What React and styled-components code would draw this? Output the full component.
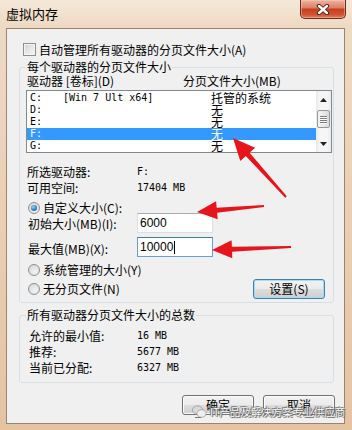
import React from "react";
import styled, { createGlobalStyle } from "styled-components";

const GlobalStyle = createGlobalStyle`
  html, body { margin: 0; padding: 0; background: #fff; }
  body {
    font-family: "Noto Sans CJK SC", "Liberation Sans", sans-serif;
    font-size: 12px;
    color: #000;
  }
`;

const drives = [
  { id: "C:", label: "[Win 7 Ult x64]", size: "托管的系统" },
  { id: "D:", label: "", size: "无" },
  { id: "E:", label: "", size: "无" },
  { id: "F:", label: "", size: "无", selected: true },
  { id: "G:", label: "", size: "无" },
];

const totals = [
  ["允许的最小值:", "16 MB"],
  ["推荐:", "5677 MB"],
  ["当前已分配:", "6327 MB"],
];

// tapered red annotation arrow, tail -> tip
function arrowPoints([tx, ty], [px, py], len, half, w1, w2) {
  const d = Math.hypot(px - tx, py - ty);
  const dx = (px - tx) / d;
  const dy = (py - ty) / d;
  const nx = -dy;
  const ny = dx;
  const bx = px - dx * len;
  const by = py - dy * len;
  const pts = [
    [tx + (nx * w1) / 2, ty + (ny * w1) / 2],
    [bx + (nx * w2) / 2, by + (ny * w2) / 2],
    [bx + nx * half, by + ny * half],
    [px, py],
    [bx - nx * half, by - ny * half],
    [bx - (nx * w2) / 2, by - (ny * w2) / 2],
    [tx - (nx * w1) / 2, ty - (ny * w1) / 2],
  ];
  return pts.map((p) => p.map((v) => v.toFixed(1)).join(",")).join(" ");
}

const arrows = [
  { tail: [286, 197], tip: [233, 138], len: 22, half: 10 },
  { tail: [264, 206], tip: [197, 212], len: 20, half: 9 },
  { tail: [291, 247], tip: [212, 250], len: 20, half: 9 },
];

export default function App() {
  return (
    <>
      <GlobalStyle />
      <Window>
        <TitleBar>
          <Title>虚拟内存</Title>
          <CloseButton>
            <svg width="14" height="11" viewBox="0 0 14 11">
              <path d="M3 2 L11 9 M11 2 L3 9" stroke="#4a1a12" strokeWidth="4.2" strokeLinecap="round" />
              <path d="M3 2 L11 9 M11 2 L3 9" stroke="#fff" strokeWidth="2.4" strokeLinecap="round" />
            </svg>
          </CloseButton>
        </TitleBar>

        <Client>
          <CheckRow>
            <CheckBox />
            <span>自动管理所有驱动器的分页文件大小(A)</span>
          </CheckRow>

          <Group $mt={4} $pad="0 1px 3px 6px">
            <Legend>每个驱动器的分页文件大小</Legend>
            <ColumnHeader>
              <span>驱动器 [卷标](D)</span>
              <span>分页文件大小(MB)</span>
            </ColumnHeader>

            <ListBox>
              <Rows>
                {drives.map((d) => (
                  <DriveRow key={d.id} $selected={d.selected}>
                    <Mono>{d.id}</Mono>
                    <Mono>{d.label}</Mono>
                    <SizeCell>{d.size}</SizeCell>
                  </DriveRow>
                ))}
              </Rows>
              <ScrollBar>
                <ScrollArrow>
                  <svg width="7" height="4" viewBox="0 0 7 4">
                    <path d="M0 4 L3.5 0 L7 4 Z" fill="#222" />
                  </svg>
                </ScrollArrow>
                <Track>
                  <Thumb>
                    <Grip />
                    <Grip />
                    <Grip />
                    <Grip />
                  </Thumb>
                </Track>
                <ScrollArrow>
                  <svg width="7" height="4" viewBox="0 0 7 4">
                    <path d="M0 0 L3.5 4 L7 0 Z" fill="#222" />
                  </svg>
                </ScrollArrow>
              </ScrollBar>
            </ListBox>

            <InfoRow $mt={11}>
              <span>所选驱动器:</span>
              <Mono>F:</Mono>
            </InfoRow>
            <InfoRow>
              <span>可用空间:</span>
              <Mono>17404 MB</Mono>
            </InfoRow>

            <RadioRow $mt={6} $h={12}>
              <Radio $checked />
              <span>自定义大小(C):</span>
            </RadioRow>

            <InputRow $mt={-1}>
              <span>初始大小(MB)(I):</span>
              <TextBox>6000</TextBox>
            </InputRow>
            <InputRow $mt={4}>
              <InputLabel>最大值(MB)(X):</InputLabel>
              <TextBox $focused>
                10000
                <Caret />
              </TextBox>
            </InputRow>

            <RadioRow $mt={6} $h={14}>
              <Radio />
              <span>系统管理的大小(Y)</span>
            </RadioRow>
            <LastRow>
              <RadioRow $h={20}>
                <Radio />
                <span>无分页文件(N)</span>
              </RadioRow>
              <Button $default>设置(S)</Button>
            </LastRow>
          </Group>

          <Group $mt={5} $pad="6px 1px 6px 6px">
            <Legend>所有驱动器分页文件大小的总数</Legend>
            {totals.map(([k, v]) => (
              <TotalRow key={k}>
                <span>{k}</span>
                <Mono>{v}</Mono>
              </TotalRow>
            ))}
          </Group>

          <Footer>
            <Button>确定</Button>
            <Button>取消</Button>
          </Footer>
        </Client>

        <Annotations width="352" height="430" viewBox="0 0 352 430">
          {arrows.map((a, i) => (
            <polygon
              key={i}
              points={arrowPoints(a.tail, a.tip, a.len, a.half, 2.2, 5)}
              fill="#e8141c"
            />
          ))}
        </Annotations>

        <Watermark>
          <svg width="15" height="14" viewBox="0 0 15 14">
            <ellipse cx="5.5" cy="5" rx="5" ry="4.2" fill="#d9d9d9" stroke="#9a9a9a" strokeWidth="0.8" />
            <ellipse cx="9.5" cy="8.5" rx="4.6" ry="3.8" fill="#eeeeee" stroke="#9a9a9a" strokeWidth="0.8" />
            <path d="M3 12.5 L9 12.5" stroke="#777" strokeWidth="1" />
          </svg>
          <WatermarkText>IT产品及解决方案专业供应商</WatermarkText>
        </Watermark>
      </Window>
    </>
  );
}

const Window = styled.div`
  position: relative;
  width: 352px;
  height: 430px;
  box-sizing: border-box;
  padding: 0 7px 6px 6px;
  display: flex;
  flex-direction: column;
  overflow: hidden;
  background: linear-gradient(180deg, #f5e8d9 0px, #eedac3 26px, #e8cdb0 60%, #e4c3a3 100%);
`;

const TitleBar = styled.div`
  height: 28px;
  display: flex;
  align-items: flex-start;
  flex-shrink: 0;
`;

const Title = styled.div`
  margin-top: 6px;
  font-size: 13px;
  line-height: 16px;
  color: #000;
`;

const CloseButton = styled.div`
  margin-left: auto;
  margin-right: -1px;
  width: 46px;
  height: 19px;
  box-sizing: border-box;
  border: 1px solid #6b2a1e;
  border-top: none;
  border-radius: 0 0 5px 5px;
  display: flex;
  align-items: center;
  justify-content: center;
  background: linear-gradient(180deg, #eeb3a2 0%, #dd8068 42%, #c7401f 52%, #cf5233 80%, #e07a5c 100%);
  box-shadow: inset 0 0 0 1px rgba(255, 210, 195, 0.45);
`;

const Client = styled.div`
  flex: 1;
  display: flex;
  flex-direction: column;
  border: 1px solid #9e836c;
  background: #f0f0f0;
  padding: 14px 9px 0 0;
`;

const CheckRow = styled.div`
  display: flex;
  align-items: center;
  gap: 3px;
  height: 13px;
  line-height: 13px;
  margin-left: 16px;
`;

const CheckBox = styled.div`
  width: 13px;
  height: 13px;
  box-sizing: border-box;
  border: 1px solid #8e8f8f;
  background: linear-gradient(135deg, #cdd0d4 0%, #e6e6e6 50%, #f7f7f7 100%);
  box-shadow: inset 0 0 0 1px #f4f4f4;
`;

const Group = styled.fieldset`
  margin: ${(p) => p.$mt}px 0 0 12px;
  width: 315px;
  min-width: 0;
  box-sizing: border-box;
  border: 1px solid #d5dfe5;
  border-radius: 3px;
  padding: ${(p) => p.$pad};
`;

const Legend = styled.legend`
  padding: 0 1px;
  font-size: 12px;
  line-height: 14px;
`;

const ColumnHeader = styled.div`
  display: grid;
  grid-template-columns: 156px 1fr;
  padding-left: 1px;
  line-height: 14px;
  height: 14px;
`;

const ListBox = styled.div`
  margin-top: 2px;
  height: 63px;
  box-sizing: border-box;
  border: 1px solid #828790;
  background: #fff;
  display: flex;
`;

const Rows = styled.div`
  flex: 1;
  padding-top: 1px;
`;

const DriveRow = styled.div`
  display: grid;
  grid-template-columns: 33px 148px 1fr;
  height: 12px;
  line-height: 12px;
  padding-left: 3px;
  background: ${(p) => (p.$selected ? "#3399ff" : "transparent")};
  color: ${(p) => (p.$selected ? "#fff" : "#000")};
`;

const Mono = styled.span`
  font-family: "DejaVu Sans Mono", "Liberation Mono", monospace;
  font-size: 10px;
  line-height: inherit;
  white-space: pre;
`;

const SizeCell = styled.span`
  font-size: 12px;
  line-height: 12px;
`;

const ScrollBar = styled.div`
  width: 15px;
  display: flex;
  flex-direction: column;
  background: linear-gradient(90deg, #e9e9e9 0%, #f6f6f6 25%, #f6f6f6 75%, #ececec 100%);
`;

const ScrollArrow = styled.div`
  height: 17px;
  display: flex;
  align-items: center;
  justify-content: center;
  flex-shrink: 0;
`;

const Track = styled.div`
  flex: 1;
  padding: 2px 1px 0;
`;

const Thumb = styled.div`
  height: 18px;
  box-sizing: border-box;
  border: 1px solid #979797;
  border-radius: 2px;
  background: linear-gradient(90deg, #f4f4f4 0%, #e9e9e9 50%, #d9d9d9 100%);
  display: flex;
  flex-direction: column;
  align-items: center;
  justify-content: center;
  gap: 1px;
`;

const Grip = styled.div`
  width: 7px;
  height: 1px;
  background: #7a7a7a;
  box-shadow: 0 1px 0 #fff;
`;

const InfoRow = styled.div`
  display: grid;
  grid-template-columns: 110px 1fr;
  height: 16px;
  line-height: 16px;
  padding-left: 1px;
  margin-top: ${(p) => p.$mt || 0}px;
`;

const RadioRow = styled.div`
  display: flex;
  align-items: center;
  gap: 3px;
  padding-left: 2px;
  height: ${(p) => p.$h}px;
  line-height: ${(p) => p.$h}px;
  margin-top: ${(p) => p.$mt || 0}px;
`;

const Radio = styled.div`
  width: 12px;
  height: 12px;
  box-sizing: border-box;
  border-radius: 50%;
  border: 1px solid #8e8f8f;
  background: radial-gradient(circle at 60% 65%, #f4f4f4 0%, #dcdcdc 70%, #c9c9c9 100%);
  display: flex;
  align-items: center;
  justify-content: center;

  &::after {
    content: "";
    display: ${(p) => (p.$checked ? "block" : "none")};
    width: 6px;
    height: 6px;
    border-radius: 50%;
    background: radial-gradient(circle at 40% 35%, #9fd4f9 0%, #2a7fc9 55%, #164f8a 100%);
  }
`;

const InputRow = styled.div`
  display: grid;
  grid-template-columns: 109px 76px;
  align-items: center;
  height: 20px;
  padding-left: 2px;
  margin-top: ${(p) => p.$mt}px;
`;

const InputLabel = styled.span`
  padding-top: 3px;
`;

const TextBox = styled.div`
  height: 20px;
  box-sizing: border-box;
  border: 1px solid ${(p) => (p.$focused ? "#6a9fcf" : "#dde1e7")};
  border-top-color: ${(p) => (p.$focused ? "#3d7bad" : "#abadb3")};
  background: #fff;
  padding-left: 2px;
  display: flex;
  align-items: center;
  font-family: "Liberation Sans", Arial, sans-serif;
  font-size: 12px;
  line-height: 18px;
`;

const Caret = styled.span`
  display: inline-block;
  width: 1px;
  height: 13px;
  background: #000;
  margin-left: 1px;
`;

const LastRow = styled.div`
  display: flex;
  align-items: center;
  justify-content: space-between;
  height: 20px;
  margin-top: 2px;
  margin-right: 7px;
`;

const Button = styled.div`
  width: 72px;
  height: 20px;
  box-sizing: border-box;
  border: 1px solid ${(p) => (p.$default ? "#3c7fb1" : "#707070")};
  border-radius: 3px;
  background: linear-gradient(180deg, #f2f2f2 0%, #ebebeb 49%, #dddddd 50%, #cfcfcf 100%);
  box-shadow: inset 0 0 0 1px ${(p) => (p.$default ? "#a8dcf5" : "#fcfcfc")};
  display: flex;
  align-items: center;
  justify-content: center;
  font-size: 12px;
  line-height: 18px;
`;

const TotalRow = styled.div`
  display: grid;
  grid-template-columns: 108px 1fr;
  height: 16px;
  line-height: 16px;
  padding-left: 3px;
`;

const Footer = styled.div`
  display: flex;
  justify-content: flex-end;
  gap: 9px;
  margin-top: 12px;
`;

const Annotations = styled.svg`
  position: absolute;
  left: 0;
  top: 0;
  pointer-events: none;
`;

const Watermark = styled.div`
  position: absolute;
  left: 192px;
  top: 405px;
  display: flex;
  align-items: center;
  gap: 3px;
  pointer-events: none;
`;

const WatermarkText = styled.span`
  font-size: 10.5px;
  line-height: 14px;
  color: #fff;
  white-space: nowrap;
  text-shadow: 0 0 1px #555, 0 0 1px #555, 1px 1px 0 #777, -1px -1px 0 #888;
`;
